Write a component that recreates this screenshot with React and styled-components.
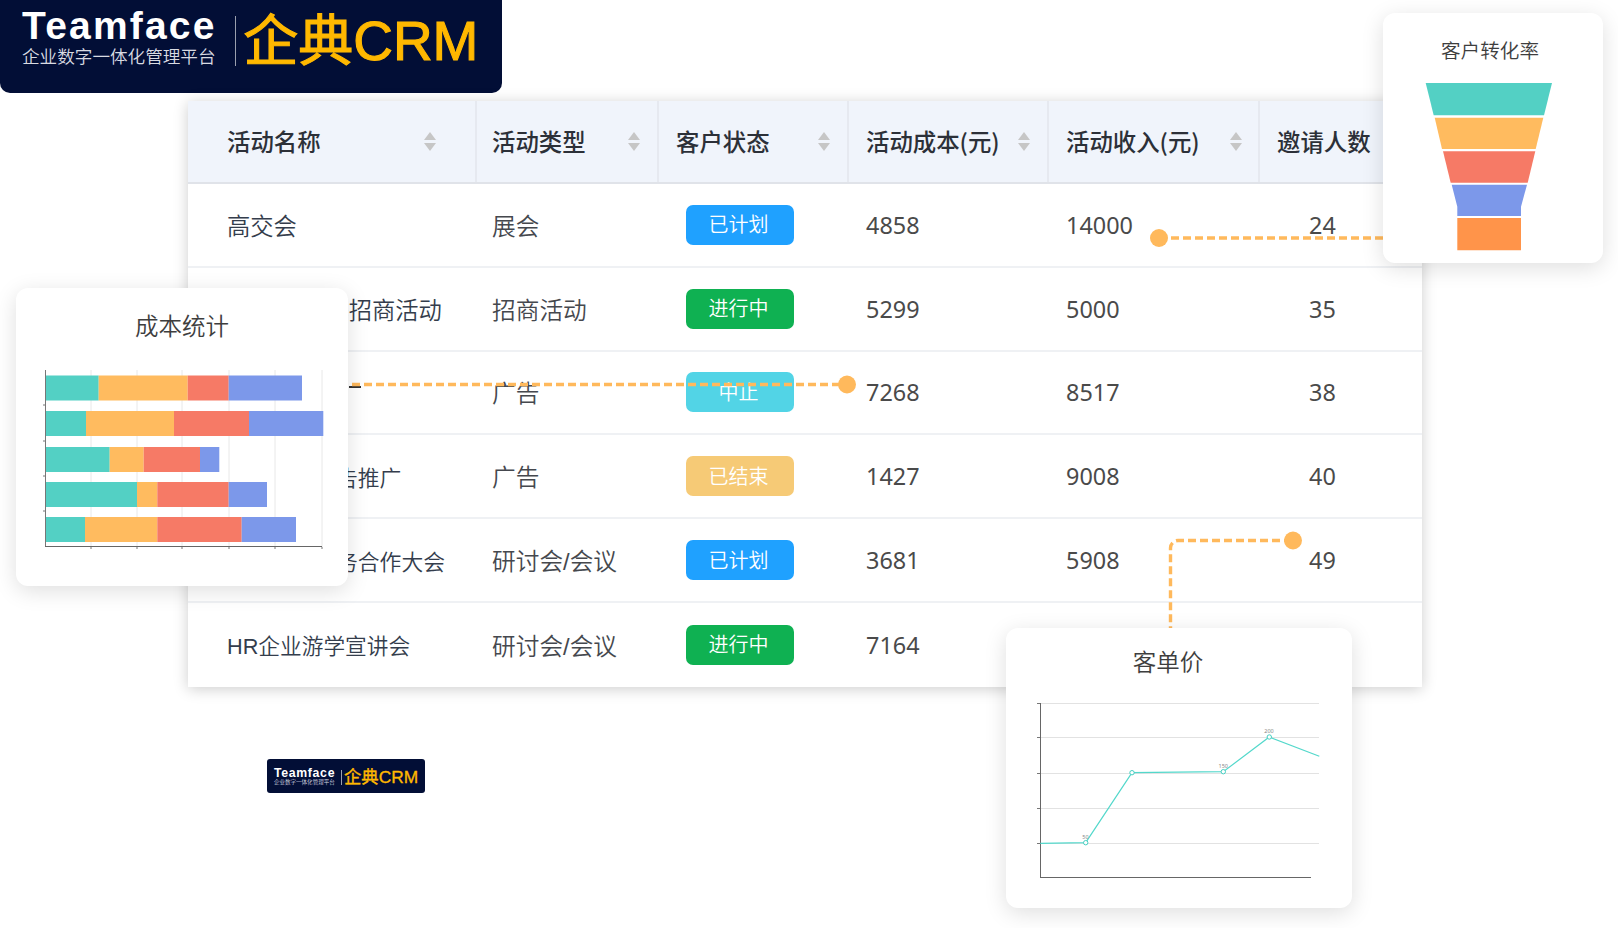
import React from 'react';
import styled, { createGlobalStyle } from 'styled-components';

const Global = createGlobalStyle`
  html, body { margin: 0; padding: 0; background: #fff; }
  body { font-family: "Noto Sans", "Noto Sans CJK SC", sans-serif; }
`;

const Page = styled.div`
  position: relative;
  width: 1618px;
  height: 928px;
  overflow: hidden;
  background: #fff;
`;

const LogoBox = styled.div`
  display: flex;
  align-items: center;
  box-sizing: border-box;
  width: ${p => 502 * p.$s}px;
  height: ${p => p.$h}px;
  padding: 0 0 ${p => p.$s === 1 ? 21 : 0}px ${p => 22 * p.$s}px;
  background: #020e36;
  border-radius: ${p => p.$s === 1 ? '0 0 10px 10px' : '3px'};
  margin-left: ${p => p.$left || 0}px;
  margin-top: ${p => p.$top || 0}px;
`;
const LogoLeft = styled.div`
  display: flex;
  flex-direction: column;
  align-items: flex-start;
`;
const LogoName = styled.div`
  font-family: "Liberation Sans", Arial, sans-serif;
  font-weight: 700;
  color: #fff;
  font-size: ${p => 39 * p.$s}px;
  letter-spacing: ${p => 2.2 * p.$s}px;
  line-height: ${p => 40 * p.$s}px;
`;
const LogoSub = styled.div`
  font-family: "Noto Sans CJK SC", sans-serif;
  font-weight: 350;
  color: #d9dbe2;
  font-size: ${p => 17.6 * p.$s}px;
  line-height: ${p => 20 * p.$s}px;
  white-space: nowrap;
`;
const LogoDivider = styled.div`
  width: ${p => Math.max(1, 1.5 * p.$s)}px;
  height: ${p => 50 * p.$s}px;
  margin: ${p => 10 * p.$s}px ${p => 7 * p.$s}px 0 ${p => 18 * p.$s}px;
  background: #9a9fae;
`;
const LogoBrand = styled.div`
  font-family: "Liberation Sans", "Noto Sans CJK SC", sans-serif;
  color: #ffb800;
  font-size: ${p => 55 * p.$s}px;
  line-height: ${p => 60 * p.$s}px;
  -webkit-text-stroke: ${p => 1.1 * p.$s}px #ffb800;
  white-space: nowrap;
  margin-top: ${p => 10 * p.$s}px;
`;

const Logo = ({ s, h, left, top }) => (
  <LogoBox $s={s} $h={h} $left={left} $top={top}>
    <LogoLeft>
      <LogoName $s={s}>Teamface</LogoName>
      <LogoSub $s={s}>企业数字一体化管理平台</LogoSub>
    </LogoLeft>
    <LogoDivider $s={s} />
    <LogoBrand $s={s}>企典CRM</LogoBrand>
  </LogoBox>
);

const Table = styled.div`
  width: 1234px;
  margin: 8px 0 0 188px;
  background: #fff;
  box-shadow: 0 2px 14px rgba(0, 0, 0, 0.2);
`;
const COLS = '289px 182px 190px 200px 211px 162px';
const HeadRow = styled.div`
  display: grid;
  grid-template-columns: ${COLS};
  height: 83px;
  box-sizing: border-box;
  background: #f0f4fb;
  border-bottom: 2px solid #e0e3e9;
`;
const HeadCell = styled.div`
  display: flex;
  align-items: center;
  justify-content: space-between;
  box-sizing: border-box;
  padding: 0 ${p => p.$right}px 2px ${p => p.$left}px;
  border-right: 2px solid #e6e9f0;
  font-size: 23.4px;
  font-weight: 500;
  color: #2c3038;
  font-family: "Noto Sans CJK SC", "Noto Sans", sans-serif;
  white-space: nowrap;
  &:last-child { border-right: none; }
`;
const SortWrap = styled.span`
  display: flex;
  flex-direction: column;
  gap: 3px;
  margin-top: 1px;
`;
const Arrow = styled.i`
  display: block;
  width: 0;
  height: 0;
  border-left: 6px solid transparent;
  border-right: 6px solid transparent;
  ${p => p.$up ? 'border-bottom: 8px solid #c6c6c6;' : 'border-top: 8px solid #c6c6c6;'}
`;
const Sort = () => (
  <SortWrap><Arrow $up /><Arrow /></SortWrap>
);

const Row = styled.div`
  display: grid;
  grid-template-columns: ${COLS};
  height: 83.8px;
  box-sizing: border-box;
  border-bottom: 2px solid #eff1f4;
  &:last-child { border-bottom: none; height: 84px; }
`;
const Cell = styled.div`
  display: flex;
  align-items: center;
  justify-content: ${p => p.$center ? 'center' : 'flex-start'};
  box-sizing: border-box;
  padding-left: ${p => p.$left || 0}px;
  padding-right: ${p => p.$right || 0}px;
  white-space: nowrap;
`;
const NameText = styled.span`
  font-family: "Liberation Sans", "Noto Sans CJK SC", sans-serif;
  font-size: ${p => p.$size}px;
  font-weight: 350;
  color: #343d4c;
`;
const TypeText = styled.span`
  font-family: "Liberation Sans", "Noto Sans CJK SC", sans-serif;
  font-size: 23.7px;
  font-weight: 350;
  color: #45484e;
`;
const Num = styled.span`
  color: #4a4a4a;
  font-size: 23.4px;
`;
const Stub = styled.i`
  display: inline-block;
  width: 12px;
  height: 2px;
  margin-left: 6px;
  background: #333;
  align-self: flex-start;
  margin-top: 34px;
`;
const TAGS = { blue: '#1fa1ff', green: '#0fb152', cyan: '#52d4e6', amber: '#f6ca76' };
const Tag = styled.span`
  display: inline-flex;
  align-items: center;
  justify-content: center;
  box-sizing: border-box;
  width: 108px;
  height: 40px;
  padding: 0 3px 2px 0;
  border-radius: 7px;
  background: ${p => TAGS[p.$kind]};
  color: #fff;
  font-size: 20px;
  font-weight: 350;
  font-family: "Noto Sans CJK SC", sans-serif;
`;

const Card = styled.div`
  position: absolute;
  left: ${p => p.$x}px;
  top: ${p => p.$y}px;
  width: ${p => p.$w}px;
  height: ${p => p.$h}px;
  box-sizing: border-box;
  padding-top: ${p => p.$pad}px;
  background: #fff;
  border-radius: 12px;
  box-shadow: 0 5px 22px rgba(0, 0, 0, 0.13);
  z-index: 3;
`;
const CardTitle = styled.div`
  text-align: center;
  color: #3e3e3e;
  font-size: ${p => p.$size}px;
  font-weight: 350;
  line-height: 30px;
  padding-right: ${p => p.$shift || 0}px;
  font-family: "Noto Sans CJK SC", sans-serif;
`;
const ChartSvg = styled.svg`
  display: block;
  margin-top: ${p => p.$gap}px;
`;
const ConnectorLayer = styled.svg`
  position: absolute;
  left: 0;
  top: 0;
  z-index: 2;
  pointer-events: none;
`;

const BARS = [
  { y: 375.5, h: 25, xs: [45, 98.7, 187.7, 228.7, 302] },
  { y: 411, h: 25, xs: [45, 86, 174, 249, 323.3] },
  { y: 447, h: 25, xs: [45, 109.7, 143.7, 200, 219.3] },
  { y: 482, h: 25, xs: [45, 137, 157.3, 228.7, 267] },
  { y: 517, h: 25, xs: [45, 85, 157.3, 241.7, 296] },
];
const BAR_COLORS = ['#53d0c4', '#ffbb5f', '#f67a66', '#7c98ea'];

const CostChart = () => (
  <ChartSvg $gap={20} width="332" height="200" viewBox="16 360 332 200">
    {[91, 137, 182, 229, 275, 322].map(x => (
      <line key={x} x1={x} x2={x} y1="370" y2="547" stroke="#e8e8e8" strokeWidth="1" />
    ))}
    {BARS.map((b, i) => b.xs.slice(0, 4).map((x, j) => (
      <rect key={`${i}-${j}`} x={x} y={b.y} width={b.xs[j + 1] - x} height={b.h} fill={BAR_COLORS[j]} />
    )))}
    <line x1="45.5" x2="45.5" y1="370" y2="547" stroke="#777" strokeWidth="1" />
    <line x1="45" x2="322" y1="546.5" y2="546.5" stroke="#666" strokeWidth="1" />
    {[405, 441, 476, 511].map(y => (
      <line key={y} x1="43" x2="45" y1={y} y2={y} stroke="#777" strokeWidth="1" />
    ))}
    {[91, 137, 182, 229, 275, 322].map(x => (
      <line key={x} x1={x} x2={x} y1="547" y2="549" stroke="#777" strokeWidth="1" />
    ))}
  </ChartSvg>
);

const GRID_Y = [704.5, 738.5, 774.5, 809.5, 844.5];
const LINE_PTS = [[1040.3, 844.3], [1085.7, 843.7], [1132, 773.7], [1223.3, 772.7], [1269.3, 738], [1319.3, 757.3]];

const PriceChart = () => (
  <ChartSvg $gap={18} width="346" height="200" viewBox="1006 695 346 200">
    {GRID_Y.map(y => (
      <g key={y}>
        <line x1="1040" x2="1319" y1={y} y2={y} stroke="#e2e2e2" strokeWidth="1" />
        <line x1="1037" x2="1040" y1={y} y2={y} stroke="#777" strokeWidth="1" />
      </g>
    ))}
    <line x1="1040.5" x2="1040.5" y1="704" y2="878.5" stroke="#666" strokeWidth="1" />
    <line x1="1040" x2="1311" y1="878.5" y2="878.5" stroke="#666" strokeWidth="1" />
    <polyline points={LINE_PTS.map(p => p.join(',')).join(' ')} fill="none" stroke="#53d8cb" strokeWidth="1.2" />
    {LINE_PTS.slice(1, 5).map(([x, y]) => (
      <circle key={x} cx={x} cy={y} r="2.2" fill="#fff" stroke="#45cfc2" strokeWidth="1" />
    ))}
    <text x="1085.5" y="840" fontSize="5.5" fill="#888" textAnchor="middle">50</text>
    <text x="1223.3" y="769" fontSize="5.5" fill="#888" textAnchor="middle">150</text>
    <text x="1269" y="733.5" fontSize="5.5" fill="#888" textAnchor="middle">200</text>
  </ChartSvg>
);

const FunnelChart = () => (
  <ChartSvg $gap={5} width="220" height="190" viewBox="1383 70 220 190">
    <polygon fill="#53d0c4" points="1425.7,83 1552,83 1544,115.3 1433.7,115.3" />
    <polygon fill="#ffbb5f" points="1434.7,117.7 1543.3,117.7 1535.7,149 1442,149" />
    <polygon fill="#f67a66" points="1443,151.3 1535.3,151.3 1527.7,182.7 1450.7,182.7" />
    <polygon fill="#7c98ea" points="1451.7,184.7 1527,184.7 1521,206.7 1521,216 1457.3,216 1457.3,206.7" />
    <polygon fill="#ff944a" points="1457.3,218 1521,218 1521,250.3 1457.3,250.3" />
  </ChartSvg>
);

const Connectors = () => (
  <ConnectorLayer width="1618" height="928" viewBox="0 0 1618 928">
    <g fill="none" stroke="#ffb95c" strokeWidth="3.4" strokeDasharray="8 4">
      <path d="M1159 238H1383" />
      <path d="M340 384.5H847" />
      <path d="M1292 540.5H1178a7.5 7.5 0 0 0-7.5 7.5V628" />
    </g>
    <g fill="#ffb95c">
      <circle cx="1159" cy="238" r="9" />
      <circle cx="847" cy="384.5" r="9" />
      <circle cx="1293" cy="540.5" r="9" />
    </g>
  </ConnectorLayer>
);

const HEAD = [
  ['活动名称', 39, 39, true],
  ['活动类型', 15, 17, true],
  ['客户状态', 17, 17, true],
  ['活动成本(元)', 17, 17, true],
  ['活动收入(元)', 17, 16, true],
  ['邀请人数', 17, 18, false],
];

const ROWS = [
  ['高交会', 23.3, '展会', ['已计划', 'blue'], 4858, 14000, 24],
  ['2019年春季招商活动', 23.3, '招商活动', ['进行中', 'green'], 5299, 5000, 35],
  ['户外广告牌', 23.3, '广告', ['中止', 'cyan'], 7268, 8517, 38, true],
  ['线上线下广告推广', 21.8, '广告', ['已结束', 'amber'], 1427, 9008, 40],
  ['全国企业商务合作大会', 21.8, '研讨会/会议', ['已计划', 'blue'], 3681, 5908, 49],
  ['HR企业游学宣讲会', 21.7, '研讨会/会议', ['进行中', 'green'], 7164, 6210, 52],
];

export default function App() {
  return (
    <Page>
      <Global />
      <Logo s={1} h={93} />
      <Table>
        <HeadRow>
          {HEAD.map(([t, l, r, sort]) => (
            <HeadCell key={t} $left={l} $right={r}>
              {t}
              {sort && <Sort />}
            </HeadCell>
          ))}
        </HeadRow>
        {ROWS.map(([name, size, type, [tag, kind], cost, income, people, stub]) => (
          <Row key={name}>
            <Cell $left={39}>
              <NameText $size={size}>{name}</NameText>
              {stub && <Stub />}
            </Cell>
            <Cell $left={15}><TypeText>{type}</TypeText></Cell>
            <Cell $left={27}><Tag $kind={kind}>{tag}</Tag></Cell>
            <Cell $left={17}><Num>{cost}</Num></Cell>
            <Cell $left={17}><Num>{income}</Num></Cell>
            <Cell $center $right={37}><Num>{people}</Num></Cell>
          </Row>
        ))}
      </Table>
      <Logo s={0.315} h={34} left={267} top={72} />
      <Connectors />
      <Card $x={16} $y={288} $w={332} $h={298} $pad={22}>
        <CardTitle $size={23.5}>成本统计</CardTitle>
        <CostChart />
      </Card>
      <Card $x={1006} $y={628} $w={346} $h={280} $pad={18}>
        <CardTitle $size={23.5} $shift={22}>客单价</CardTitle>
        <PriceChart />
      </Card>
      <Card $x={1383} $y={13} $w={220} $h={250} $pad={22}>
        <CardTitle $size={19.6} $shift={6}>客户转化率</CardTitle>
        <FunnelChart />
      </Card>
    </Page>
  );
}
